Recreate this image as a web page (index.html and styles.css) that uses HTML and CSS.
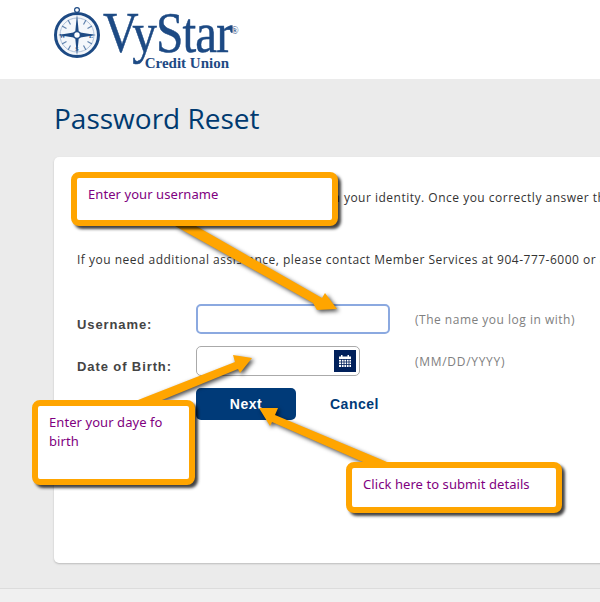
FILE: index.html
```html
<!DOCTYPE html>
<html lang="en">
<head>
<meta charset="utf-8">
<title>Password Reset</title>
<link rel="stylesheet" href="styles.css">
</head>
<body>
<div class="page">
  <header class="site-header">
    <svg class="compass" viewBox="0 0 50 56" width="50" height="56" aria-hidden="true">
      <circle cx="25" cy="5" r="2.4" fill="none" stroke="#1d4a84" stroke-width="1.2"/>
      <circle cx="25" cy="30" r="21.5" fill="#f4f7fb" stroke="#1d4a84" stroke-width="3"/>
      <circle cx="25" cy="30" r="17" fill="none" stroke="#9db3cf" stroke-width="0.8"/>
      <g stroke="#5f82ad" stroke-width="1.2">
        <path d="M34 15l-2.5 4.5M40 21l-4.5 2.5M40 39l-4.5-2.5M34 45l-2.500-4.500M16 45l2.500-4.500M10 39l4.500-2.500M10 21l4.500 2.500M16 15l2.500 4.500"/>
      </g>
      <path d="M25 9l1.800 18.200L44 30l-17.200 2.800L25 51l-1.800-18.200L6 30l17.200-2.800z" fill="#1d4a84"/>
      <circle cx="25" cy="30" r="3.400" fill="#fff" stroke="#1d4a84" stroke-width="1.400"/>
      <text class="compass-letter" x="10.500" y="32.500" text-anchor="middle">W</text>
      <text class="compass-letter" x="39" y="32.500" text-anchor="middle">E</text>
      <text class="compass-letter" x="25" y="46" text-anchor="middle">S</text>
    </svg>
    <div class="wordmark">
      <div class="wordmark-name">VyStar</div>
      <div class="wordmark-sub">Credit Union</div>
      <span class="reg">®</span>
    </div>
  </header>

  <main class="content">
    <h1 class="title">Password Reset</h1>
    <section class="card">
      <p class="intro intro-first">Please answer the questions here based on your identity. Once you correctly answer the questions you can reset your password.</p>
      <p class="intro intro-second">If you need additional assistance, please contact Member Services at 904-777-6000 or 800-445-6289.</p>
      <form class="form">
        <div class="row row-user">
          <label class="label" for="username">Username:</label>
          <input class="field field-user" id="username" type="text">
          <span class="hint hint-user">(The name you log in with)</span>
        </div>
        <div class="row row-dob">
          <label class="label">Date of Birth:</label>
          <div class="field field-dob">
            <span class="cal">
              <svg viewBox="0 0 14 14" width="14" height="14" aria-hidden="true">
                <path d="M1 2.500h12V13H1z" fill="#fff"/>
                <path d="M3 1h1.500v2H3zM9.500 1H11v2H9.500z" fill="#fff"/>
                <path d="M1 5.500h12M1 8h12M1 10.500h12M3.500 5v8M6 5v8M8.500 5v8M11 5v8" stroke="#00205b" stroke-width="0.8" fill="none"/>
              </svg>
            </span>
          </div>
          <span class="hint">(MM/DD/YYYY)</span>
        </div>
        <div class="actions">
          <button class="btn-next" type="button">Next</button>
          <a class="btn-cancel">Cancel</a>
        </div>
      </form>
    </section>
  </main>
  <footer class="site-footer"></footer>

  <svg class="arrows" viewBox="0 0 600 602" width="600" height="602" aria-hidden="true">
    <polygon points="175,226 196,226 322,298 325,293 337,309 317,310 313,303"/>
    <polygon points="138,400 162,400 238,369 240,373 252,358 233,355 235,362"/>
    <polygon points="363,462 387,462 275,415 278,408 259,408 270,426 272,422"/>
  </svg>
  <div class="callout callout-user">Enter your username</div>
  <div class="callout callout-dob">Enter your daye fo birth</div>
  <div class="callout callout-next">Click here to submit details</div>
</div>
</body>
</html>
```

FILE: styles.css
```css
* { box-sizing: border-box; }
html, body { margin: 0; padding: 0; }
body { background: #ebebeb; font-family: "Open Sans", sans-serif; }

.page {
  position: relative;
  width: 600px;
  height: 602px;
  overflow: hidden;
  background: #ebebeb;
}

.site-header {
  height: 79px;
  background: #fff;
  display: flex;
  align-items: flex-start;
  padding: 5px 0 0 52px;
}
.compass { flex: none; }
.compass-letter { font: bold 6px "Liberation Serif", serif; fill: #1d4a84; }

.wordmark {
  position: relative;
  margin-left: 1px;
  width: 126px;
  padding-top: 2px;
  color: #1d4a84;
  font-family: "Liberation Serif", serif;
}
.wordmark-name {
  font-size: 56px;
  line-height: 52px;
  letter-spacing: -1px;
  white-space: nowrap;
  -webkit-text-stroke: 0.5px #1d4a84;
  transform: scaleX(0.88);
  transform-origin: left center;
}
.reg {
  position: absolute;
  left: 128px;
  top: 19px;
  font-size: 10px;
  line-height: 14px;
}
.wordmark-sub {
  font-size: 15px;
  font-weight: bold;
  line-height: 14px;
  text-align: right;
  white-space: nowrap;
  margin-top: -3px;
}

.content { padding: 0 0 0 54px; }
.title {
  margin: 0;
  padding-top: 20px;
  height: 78px;
  font-weight: 400;
  font-size: 28px;
  line-height: 38px;
  letter-spacing: 0;
  color: #003a70;
}
.card {
  width: 640px;
  height: 406px;
  background: #fff;
  border-radius: 5px;
  box-shadow: 0 1px 2px #bbb;
  padding: 32px 0 0 23px;
}
.intro {
  margin: 0;
  font-size: 12px;
  line-height: 18px;
  letter-spacing: 0.5px;
  color: #333;
  white-space: nowrap;
}
.intro-second { margin-top: 44px; }

.form { margin-top: 35px; }
.row { display: flex; align-items: center; }
.row-dob { margin-top: 12px; }
.label {
  width: 119px;
  flex: none;
  font: bold 13px "Liberation Sans", sans-serif;
  letter-spacing: 0.9px;
  color: #444;
  padding-top: 10px;
}
.field {
  display: block;
  height: 30px;
  background: #fff;
  border-radius: 5px;
  flex: none;
}
.field-user { width: 194px; border: 2px solid #8ba9e0; outline: none; margin-right: 25px; }
.field-dob {
  width: 164px;
  border: 1px solid #aaa;
  display: flex;
  align-items: center;
  justify-content: flex-end;
  padding-right: 3px;
  margin-right: 55px;
}
.cal {
  width: 22px;
  height: 22px;
  background: #00205b;
  display: flex;
  align-items: center;
  justify-content: center;
}
.hint {
  font-size: 12px;
  letter-spacing: 0.7px;
  color: #808080;
  white-space: nowrap;
}
.hint-user { letter-spacing: 0.5px; }
.actions {
  display: flex;
  align-items: center;
  margin: 12px 0 0 119px;
}
.btn-next {
  width: 100px;
  height: 32px;
  border: 0;
  border-radius: 5px;
  background: #003a78;
  color: #fff;
  font: bold 14px "Liberation Sans", sans-serif;
  letter-spacing: 0.5px;
}
.btn-cancel {
  margin-left: 34px;
  color: #003a78;
  font: bold 14px "Liberation Sans", sans-serif;
  letter-spacing: 0.5px;
}
.site-footer {
  margin-top: 25px;
  height: 14px;
  border-top: 1px solid #dcdcdc;
  background: #f0f0f0;
}

.arrows {
  position: absolute;
  left: 0;
  top: 0;
  fill: #ffa500;
  filter: drop-shadow(2px 2px 2px rgba(0, 0, 0, 0.7));
}
.callout {
  position: absolute;
  background: #fff;
  border: 6px solid #ffa500;
  border-radius: 8px;
  box-shadow: 3px 3px 3px rgba(0, 0, 0, 0.75);
  color: #800080;
  font-family: "Noto Sans", sans-serif;
  font-size: 13px;
  letter-spacing: 0.07px;
  line-height: 19px;
  padding: 7px 11px;
}
.callout-user { left: 71px; top: 172px; width: 267px; height: 54px; }
.callout-dob { left: 32px; top: 400px; width: 163px; height: 85px; }
.callout-next { left: 346px; top: 462px; width: 216px; height: 51px; }
```
